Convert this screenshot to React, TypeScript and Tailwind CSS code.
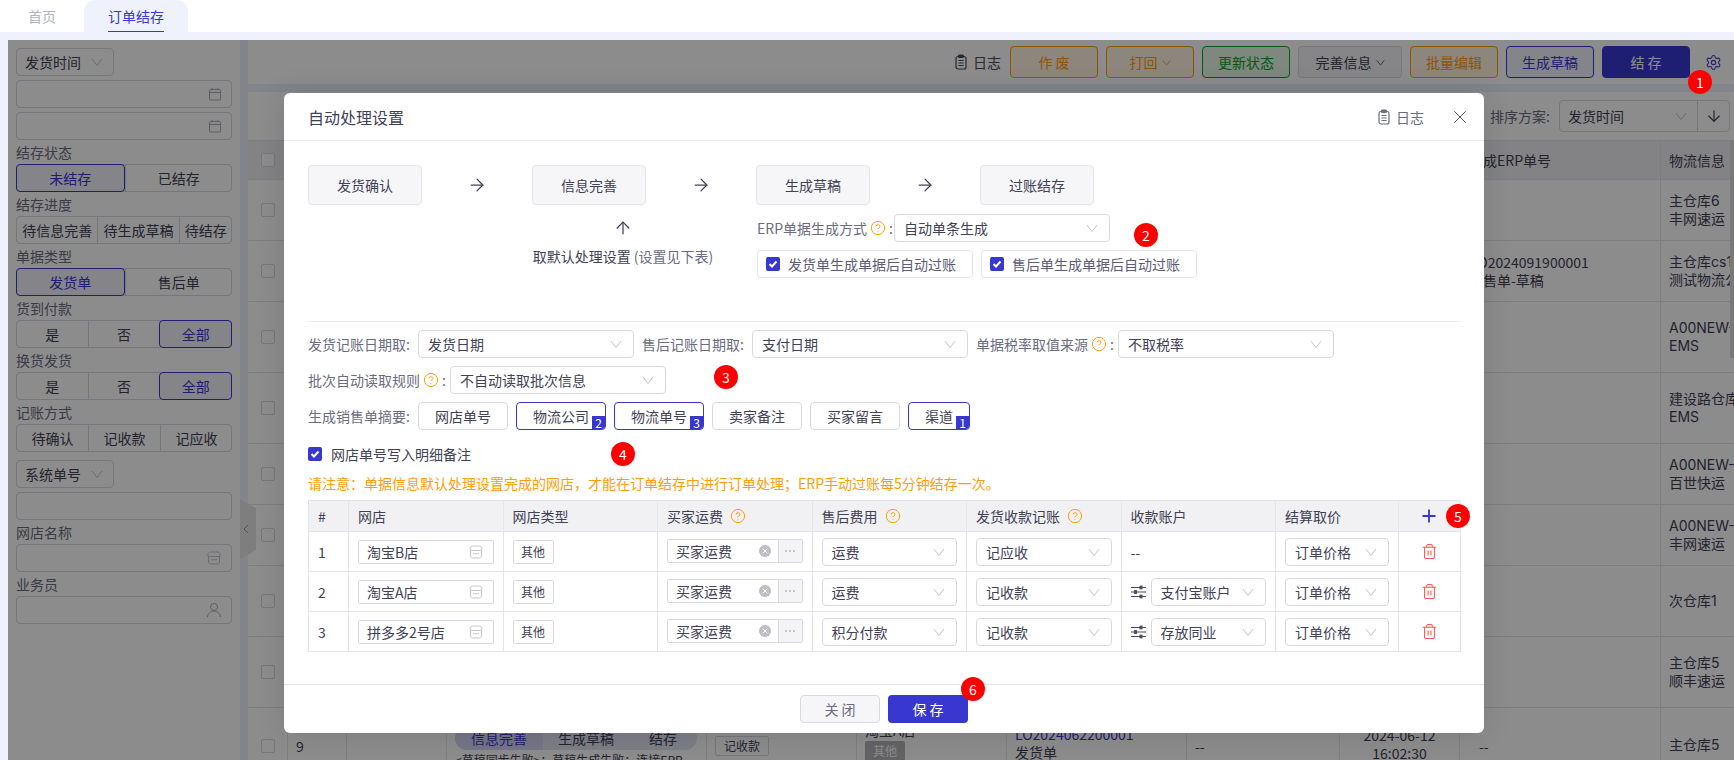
import React from 'react';
import { ArrowDown, ArrowRight, ArrowUp, CircleHelp, Plus, Settings, Trash2, X } from 'lucide-react';

const Chevron = ({ className = 'text-[#c4c5cf]' }: { className?: string }) => (
  <svg width="12" height="12" viewBox="0 0 12 12" fill="none" stroke="currentColor" strokeWidth="1" className={`shrink-0 ${className}`}>
    <polyline points="1,3 6,9.5 11,3" />
  </svg>
);

const LogIcon = () => (
  <svg width="14" height="16" viewBox="0 0 14 16" fill="none" stroke="currentColor" strokeWidth="1.2" className="shrink-0">
    <rect x="2" y="2.5" width="10" height="12.5" rx="2" />
    <rect x="4.5" y="1" width="5" height="2.5" rx="1" fill="currentColor" />
    <path d="M4.5 6.5h5M4.5 9h5M4.5 11.5h5" />
  </svg>
);

const CalendarIcon = () => (
  <svg width="14" height="14" viewBox="0 0 14 14" fill="none" stroke="currentColor" strokeWidth="1" className="text-[#a9aab4]">
    <rect x="1.5" y="2.5" width="11" height="10.5" rx="1" />
    <path d="M1.5 5.5h11M4 1v2.5M10 1v2.5" />
  </svg>
);

const StoreIcon = () => (
  <svg width="16" height="16" viewBox="0 0 16 16" fill="none" stroke="currentColor" strokeWidth="1" className="shrink-0 text-[#c4c5cf]">
    <path d="M2 6.5V4.5C2 3 3 2 4.5 2h7C13 2 14 3 14 4.5v2z" />
    <path d="M2.5 6.5V12c0 1.2 1 2 2 2h7c1 0 2-.8 2-2V6.5" />
    <path d="M5 9c1.5 1.2 4.500 1.200 6 0" />
  </svg>
);

const UserIcon = () => (
  <svg width="16" height="16" viewBox="0 0 16 16" fill="none" stroke="currentColor" strokeWidth="1" className="text-[#a9aab4]">
    <circle cx="8" cy="5" r="3.500" />
    <path d="M1.500 15c.5-3.500 3-6 6.500-6s6 2.500 6.500 6" />
  </svg>
);

const SlidersIcon = () => (
  <svg width="15" height="14" viewBox="0 0 15 14" fill="none" stroke="currentColor" strokeWidth="1.1" className="shrink-0 text-[#4a4b5c]">
    <path d="M0 2.500h15M0 7h15M0 11.500h15" />
    <rect x="9" y="1.200" width="2" height="2.600" fill="currentColor" />
    <rect x="3.500" y="5.700" width="2" height="2.600" fill="currentColor" />
    <rect x="9" y="10.200" width="2" height="2.600" fill="currentColor" />
  </svg>
);

const DotsIcon = () => (
  <svg width="12" height="4" viewBox="0 0 12 4" fill="#8a8b9a">
    <circle cx="2" cy="2" r="0.8" />
    <circle cx="6" cy="2" r="0.8" />
    <circle cx="10" cy="2" r="0.8" />
  </svg>
);

const Help = () => <CircleHelp size={16} strokeWidth={1.5} className="shrink-0 text-[#ff9d0a]" />;

const Check = () => (
  <span className="flex h-[14px] w-[14px] shrink-0 items-center justify-center rounded-[2px] bg-[#3838d0]">
    <svg width="10" height="10" viewBox="0 0 10 10" fill="none" stroke="white" strokeWidth="2">
      <polyline points="1.500,5 4,7.500 8.500,2.500" />
    </svg>
  </span>
);

const Badge = ({ n, className }: { n: number; className: string }) => (
  <div className={`absolute z-30 flex h-6 w-6 items-center justify-center rounded-full bg-[#ff0000] text-sm text-white ${className}`}>{n}</div>
);

const Seg = ({ items, active, auto }: { items: string[]; active?: number; auto?: boolean }) => (
  <div className="flex h-7 rounded-[4px] border border-[#d8d9e3] bg-white">
    {items.map((t, i) => (
      <div
        key={i}
        className={`-my-px flex items-center justify-center border-l first:-ml-px first:rounded-l-[4px] last:-mr-px last:rounded-r-[4px] ${auto ? 'flex-auto px-[5px]' : 'flex-1'} ${
          i === active
            ? 'rounded-[4px] border border-[#3838d0] bg-[#f0f0fa] text-[#3838d0]'
            : 'border-y border-r-0 border-[#d8d9e3] border-y-transparent text-[#3f4154]'
        } ${i === 0 && i !== active ? 'border-l-transparent' : ''}`}
      >
        {t}
      </div>
    ))}
  </div>
);

const SideLabel = ({ children }: { children: React.ReactNode }) => (
  <div className="flex h-[24px] items-center text-[#6b6c80]">{children}</div>
);

const SideInput = ({ icon, className = '' }: { icon?: React.ReactNode; className?: string }) => (
  <div className={`flex h-7 items-center justify-end rounded-[4px] border border-[#d8d9e3] bg-white pr-[9px] ${className}`}>{icon}</div>
);

const SideSelect = ({ text, className = '' }: { text: string; className?: string }) => (
  <div className={`flex h-7 w-[98px] items-center justify-between rounded-[4px] border border-[#d8d9e3] bg-white pl-[8px] pr-[10px] text-[#3f4154] ${className}`}>
    {text}
    <Chevron />
  </div>
);

const Sidebar = () => (
  <aside className="w-[232px] shrink-0 bg-white px-2 pt-2 text-sm">
    <SideSelect text="发货时间" />
    <SideInput icon={<CalendarIcon />} className="mt-1" />
    <SideInput icon={<CalendarIcon />} className="mt-1" />
    <SideLabel>结存状态</SideLabel>
    <Seg items={['未结存', '已结存']} active={0} />
    <SideLabel>结存进度</SideLabel>
    <Seg items={['待信息完善', '待生成草稿', '待结存']} auto />
    <SideLabel>单据类型</SideLabel>
    <Seg items={['发货单', '售后单']} active={0} />
    <SideLabel>货到付款</SideLabel>
    <Seg items={['是', '否', '全部']} active={2} />
    <SideLabel>换货发货</SideLabel>
    <Seg items={['是', '否', '全部']} active={2} />
    <SideLabel>记账方式</SideLabel>
    <Seg items={['待确认', '记收款', '记应收']} />
    <SideSelect text="系统单号" className="mt-2" />
    <SideInput className="mt-1" />
    <SideLabel>网店名称</SideLabel>
    <SideInput icon={<StoreIcon />} />
    <SideLabel>业务员</SideLabel>
    <SideInput icon={<UserIcon />} />
  </aside>
);

const toolBase = 'flex h-8 items-center justify-center gap-1 rounded-[4px] border text-sm';
const orange = 'border-[#ff9d0a] bg-[#fff4e3] text-[#ff9d0a]';

const Toolbar = () => (
  <div className="flex h-11 items-center justify-end bg-white pr-3 text-sm">
    <span className="mr-[9px] flex items-center gap-[5px] text-[#4a4b5c]">
      <LogIcon />
      日志
    </span>
    <div className="flex gap-2">
      <button className={`${toolBase} w-[88px] ${orange}`}>作 废</button>
      <button className={`${toolBase} w-[88px] ${orange}`}>
        打回 <Chevron className="h-[9px] w-[9px] text-[#ff9d0a]" />
      </button>
      <button className={`${toolBase} w-[88px] border-[#0aa31f] bg-[#e5f7e8] text-[#0aa31f]`}>更新状态</button>
      <button className={`${toolBase} w-[104px] border-[#d8d9e3] bg-[#f4f4f7] text-[#3f4154]`}>
        完善信息 <Chevron className="h-[9px] w-[9px] text-[#3f4154]" />
      </button>
      <button className={`${toolBase} w-[88px] ${orange}`}>批量编辑</button>
      <button className={`${toolBase} w-[88px] border-[#3838d0] bg-[#f0f0fd] text-[#3838d0]`}>生成草稿</button>
      <button className={`${toolBase} w-[88px] border-[#3838d0] bg-[#3838d0] text-white`}>结 存</button>
    </div>
    <Settings size={17} strokeWidth={1.5} className="ml-[15px] text-[#3838d0]" />
  </div>
);

const mainCols = 'grid grid-cols-[40px_59px_100px_260px_150px_150px_180px_153px_120px_201px_73px]';
const cell = 'flex h-full items-center overflow-hidden whitespace-nowrap border-r border-[#e4e5ea] px-2';

const rows = [
  { h: 'h-[61px]', erp: [], log: ['主仓库6', '丰网速运'] },
  { h: 'h-[61px]', erp: ['SO2024091900001', '销售单-草稿'], log: ['主仓库cs1', '测试物流公司'] },
  { h: 'h-[71px]', erp: [], log: ['A00NEW-', 'EMS'] },
  { h: 'h-[71px]', erp: [], log: ['建设路仓库', 'EMS'] },
  { h: 'h-[61px]', erp: [], log: ['A00NEW-', '百世快运'] },
  { h: 'h-[61px]', erp: [], log: ['A00NEW-', '丰网速运'] },
  { h: 'h-[71px]', erp: [], log: ['次仓库1'] },
  { h: 'h-[71px]', erp: [], log: ['主仓库5', '顺丰速运'] },
];

const RowCheck = () => <span className="h-[14px] w-[14px] rounded-[2px] border border-[#d8d9e3] bg-white" />;

const BlankCells = ({ n }: { n: number }) => (
  <>
    {Array.from({ length: n }).map((_, i) => (
      <div key={i} className={cell} />
    ))}
  </>
);

const OrderTable = () => (
  <div className="text-sm leading-[18px] text-[#3f4154]">
    <div className={`${mainCols} h-10 border-y border-[#e4e5ea] bg-[#eeeef2]`}>
      <div className={`${cell} justify-center`}>
        <RowCheck />
      </div>
      <BlankCells n={7} />
      <div className={cell} />
      <div className={`${cell} pl-[9px]`}>生成ERP单号</div>
      <div className={`${cell} border-r-0`}>物流信息</div>
    </div>
    {rows.map((r, i) => (
      <div key={i} className={`${mainCols} ${r.h} border-b border-[#e4e5ea]`}>
        <div className={`${cell} justify-center`}>
          <RowCheck />
        </div>
        <BlankCells n={8} />
        <div className={`${cell} flex-col items-start justify-center pl-[9px]`}>
          {r.erp.map(t => (
            <div key={t}>{t}</div>
          ))}
        </div>
        <div className={`${cell} flex-col items-start justify-center border-r-0 font-['Inter','Noto_Sans_CJK_SC',sans-serif]`}>
          {r.log.map(t => (
            <div key={t}>{t}</div>
          ))}
        </div>
      </div>
    ))}
    <div className={`${mainCols} h-[76px]`}>
      <div className={`${cell} justify-center`}>
        <RowCheck />
      </div>
      <div className={cell}>9</div>
      <div className={cell} />
      <div className={`${cell} flex-col items-start justify-start pt-[18px]`}>
        <div className="flex h-6 w-[242px] items-center rounded-full bg-[#e3e3f6]">
          <span className="flex h-6 w-[88px] items-center justify-center rounded-l-full bg-[#d6d6f5] text-[#3838d0]">信息完善</span>
          <span className="w-[86px] text-center">生成草稿</span>
          <span className="w-[68px] text-center">结存</span>
        </div>
        <div className="mt-[2px] text-xs">&lt;草稿同步失败&gt;：草稿生成失败：连接ERP</div>
      </div>
      <div className={cell}>
        <span className="flex h-5 w-[54px] items-center justify-center rounded-[2px] border border-[#d8d9e3] text-xs">记收款</span>
      </div>
      <div className={`${cell} flex-col items-start justify-center pb-[10px]`}>
        <div>淘宝A店</div>
        <span className="mt-[2px] flex h-5 w-10 items-center justify-center rounded-[2px] bg-[#b4b4b8] text-xs text-white">其他</span>
      </div>
      <div className={`${cell} flex-col items-start justify-center pb-[6px]`}>
        <div className="text-[#3838d0]">LO2024062200001</div>
        <div>发货单</div>
      </div>
      <div className={cell}>--</div>
      <div className={`${cell} flex-col items-center justify-center pb-[4px]`}>
        <div>2024-06-12</div>
        <div>16:02:30</div>
      </div>
      <div className={`${cell} pl-[19px]`}>--</div>
      <div className={`${cell} border-r-0 pb-[2px] font-['Inter','Noto_Sans_CJK_SC',sans-serif]`}>主仓库5</div>
    </div>
  </div>
);

const FlowBox = ({ children }: { children: React.ReactNode }) => (
  <div className="flex h-10 w-[114px] items-center justify-center rounded-[4px] border border-[#e4e5ea] bg-[#f6f6f9] text-[#3f4154]">{children}</div>
);

const FlowArrow = () => (
  <div className="flex w-[110px] items-center justify-center">
    <ArrowRight size={20} strokeWidth={1.5} className="text-[#3f4154]" />
  </div>
);

const Select = ({ text, className = 'w-[216px]', chevronRight = 'pr-[11px]' }: { text: string; className?: string; chevronRight?: string }) => (
  <div className={`flex h-7 shrink-0 items-center justify-between rounded-[4px] border border-[#d8d9e3] bg-white pl-[9px] text-[#3f4154] ${chevronRight} ${className}`}>
    {text}
    <Chevron />
  </div>
);

const CheckBox = ({ text }: { text: string }) => (
  <div className="flex h-7 w-[216px] items-center gap-2 rounded-[4px] border border-[#e4e5ea] pl-[8px] text-[#5c5d72]">
    <Check />
    {text}
  </div>
);

const FormLabel = ({ children, className }: { children: React.ReactNode; className: string }) => (
  <span className={`flex shrink-0 items-center gap-[3px] whitespace-nowrap text-[#6b6c80] ${className}`}>{children}</span>
);

const Chip = ({ text, n, className = 'w-[90px]' }: { text: string; n?: number; className?: string }) => (
  <div
    className={`relative flex h-7 items-center justify-center overflow-hidden rounded-[4px] border text-[#3f4154] ${
      n ? 'border-[#3838d0]' : 'border-[#d8d9e3]'
    } ${className}`}
  >
    {text}
    {n && <span className="absolute bottom-0 right-0 flex h-[13px] w-[13px] items-center justify-center bg-[#3838d0] text-xs leading-none text-white">{n}</span>}
  </div>
);

const shopCols = 'grid grid-cols-[40px_154.5px_154.5px_154.5px_154.5px_154.5px_154.5px_122.5px_62.5px]';
const shopCell = 'flex items-center border-b border-r border-[#e4e5ea] px-[9px]';

const shops = [
  { name: '淘宝B店', fee: '运费', record: '记应收', account: '' },
  { name: '淘宝A店', fee: '运费', record: '记收款', account: '支付宝账户' },
  { name: '拼多多2号店', fee: '积分付款', record: '记收款', account: '存放同业' },
];

const ShopTable = () => (
  <div className="mt-[7px] border-l border-t border-[#e4e5ea] text-sm text-[#3f4154]">
    <div className={`${shopCols} h-[31px] bg-[#f1f1f4]`}>
      <div className={shopCell}>#</div>
      <div className={shopCell}>网店</div>
      <div className={shopCell}>网店类型</div>
      <div className={`${shopCell} gap-[7px]`}>
        买家运费 <Help />
      </div>
      <div className={`${shopCell} gap-[7px]`}>
        售后费用 <Help />
      </div>
      <div className={`${shopCell} gap-[7px]`}>
        发货收款记账 <Help />
      </div>
      <div className={shopCell}>收款账户</div>
      <div className={shopCell}>结算取价</div>
      <div className={`${shopCell} justify-center`}>
        <Plus size={20} strokeWidth={2.2} className="text-[#3838d0]" />
      </div>
    </div>
    {shops.map((s, i) => (
      <div key={s.name} className={`${shopCols} h-10`}>
        <div className={shopCell}>{i + 1}</div>
        <div className={shopCell}>
          <div className="flex h-6 w-full items-center justify-between rounded-[2px] border border-[#d8d9e3] pl-[8px] pr-[9px]">
            {s.name}
            <StoreIcon />
          </div>
        </div>
        <div className={shopCell}>
          <span className="flex h-6 w-[41px] items-center justify-center rounded-[2px] border border-[#d8d9e3] text-xs">其他</span>
        </div>
        <div className={shopCell}>
          <div className="-mt-px flex h-6 w-full items-center rounded-[2px] border border-[#d8d9e3]">
            <span className="flex-1 pl-[8px]">买家运费</span>
            <span className="mr-[7px] flex h-3 w-3 items-center justify-center rounded-full bg-[#bdbdc2]">
              <X size={8} strokeWidth={3} className="text-white" />
            </span>
            <span className="flex h-full w-6 items-center justify-center border-l border-[#d8d9e3] bg-[#f4f4f7]">
              <DotsIcon />
            </span>
          </div>
        </div>
        <div className={shopCell}>
          <Select text={s.fee} className="h-6 w-full rounded-[2px]" />
        </div>
        <div className={shopCell}>
          <Select text={s.record} className="h-6 w-full rounded-[2px]" />
        </div>
        <div className={`${shopCell} gap-[5px]`}>
          {s.account ? (
            <>
              <SlidersIcon />
              <Select text={s.account} className="h-6 min-w-0 flex-1 rounded-[2px]" />
            </>
          ) : (
            '--'
          )}
        </div>
        <div className={shopCell}>
          <Select text="订单价格" className="h-6 w-full rounded-[2px]" />
        </div>
        <div className={`${shopCell} justify-center`}>
          <Trash2 size={17} strokeWidth={1.5} className="text-[#ff5a5a]" />
        </div>
      </div>
    ))}
  </div>
);

const Modal = () => (
  <div className="absolute left-[284px] top-[93px] z-20 flex h-[640px] w-[1200px] flex-col rounded-[6px] bg-white text-sm shadow-[0_0_30px_rgba(0,0,0,0.12)]">
    <div className="flex h-12 shrink-0 items-center justify-between border-b border-[#e9e9ee] pl-6 pr-[13px]">
      <span className="text-base text-[#3f4154]">自动处理设置</span>
      <div className="flex items-center text-[#6b6c80]">
        <span className="flex items-center gap-[5px]">
          <LogIcon />
          日志
        </span>
        <X size={22} strokeWidth={1} className="ml-[25px] text-[#3f4154]" />
      </div>
    </div>

    <div className="flex-1 px-6 pt-6">
      <div className="flex">
        <FlowBox>发货确认</FlowBox>
        <FlowArrow />
        <FlowBox>信息完善</FlowBox>
        <FlowArrow />
        <FlowBox>生成草稿</FlowBox>
        <FlowArrow />
        <FlowBox>过账结存</FlowBox>
      </div>

      <div className="mt-[9px] flex">
        <div className="w-[449px] pl-[225px]">
          <div className="flex w-[180px] flex-col items-center">
            <div className="flex h-7 items-center">
              <ArrowUp size={20} strokeWidth={1.5} className="text-[#3f4154]" />
            </div>
            <div className="mt-[4px] whitespace-nowrap text-[#3f4154]">
              取默认处理设置 <span className="text-[#6b6c80]">(设置见下表)</span>
            </div>
          </div>
        </div>
        <div className="flex flex-col gap-2">
          <div className="flex items-center">
            <FormLabel className="w-[137px]">
              ERP单据生成方式 <Help /> :
            </FormLabel>
            <Select text="自动单条生成" />
          </div>
          <div className="flex gap-2">
            <CheckBox text="发货单生成单据后自动过账" />
            <CheckBox text="售后单生成单据后自动过账" />
          </div>
        </div>
      </div>

      <div className="mt-[43px] h-px bg-[#e9e9ee]" />

      <div className="mt-2 flex flex-col gap-2">
        <div className="flex items-center gap-2">
          <FormLabel className="w-[102px]">发货记账日期取:</FormLabel>
          <Select text="发货日期" />
          <FormLabel className="w-[102px]">售后记账日期取:</FormLabel>
          <Select text="支付日期" />
          <FormLabel className="w-[134px]">
            单据税率取值来源 <Help /> :
          </FormLabel>
          <Select text="不取税率" />
        </div>
        <div className="flex items-center gap-2">
          <FormLabel className="w-[134px]">
            批次自动读取规则 <Help /> :
          </FormLabel>
          <Select text="不自动读取批次信息" />
        </div>
        <div className="flex items-center gap-2">
          <FormLabel className="w-[102px]">生成销售单摘要:</FormLabel>
          <Chip text="网店单号" />
          <Chip text="物流公司" n={2} />
          <Chip text="物流单号" n={3} />
          <Chip text="卖家备注" />
          <Chip text="买家留言" />
          <Chip text="渠道" n={1} className="w-[62px]" />
        </div>
      </div>

      <div className="mt-[16px] flex h-4 items-center gap-[9px] text-[#3f4154]">
        <Check />
        网店单号写入明细备注
      </div>
      <div className="mt-[11px] h-5 leading-5 text-[#ff9d0a]">
        请注意：单据信息默认处理设置完成的网店，才能在订单结存中进行订单处理；ERP手动过账每5分钟结存一次。
      </div>

      <ShopTable />
    </div>

    <div className="flex h-[49px] shrink-0 items-center justify-center gap-2 border-t border-[#e4e5ea]">
      <button className="h-7 w-20 rounded-[4px] border border-[#d8d9e3] bg-[#f6f6f9] text-[#6b6c80]">关 闭</button>
      <button className="h-7 w-20 rounded-[4px] bg-[#3838d0] text-white">保 存</button>
    </div>
  </div>
);

export default function App() {
  return (
    <div className="relative h-[760px] w-[1734px] overflow-hidden bg-[#eff1fd] font-['Noto_Sans_CJK_SC',sans-serif]">
      <div className="flex h-8 items-stretch bg-white text-sm">
        <div className="flex w-[84px] items-center justify-center text-[#b1b4c2]">首页</div>
        <div className="flex w-[104px] justify-center rounded-t-xl bg-[#eff1fd] text-[#3838d0]">
          <span className="flex h-8 items-center border-b border-[#3838d0]">订单结存</span>
        </div>
      </div>

      <div className="flex gap-2 pl-2 pt-2">
        <Sidebar />
        <div className="min-w-0 flex-1">
          <Toolbar />
          <div className="mt-2 bg-white">
            <div className="flex h-12 items-center justify-end pr-1 text-sm text-[#6b6c80]">
              <span className="mr-[9px]">排序方案:</span>
              <div className="flex h-8 w-[171px] items-center rounded-[4px] border border-[#d8d9e3] text-[#3f4154]">
                <span className="flex-1 pl-2">发货时间</span>
                <Chevron className="mr-[10px] text-[#c4c5cf]" />
                <span className="flex h-full w-8 items-center justify-center border-l border-[#d8d9e3]">
                  <ArrowDown size={18} strokeWidth={1.5} />
                </span>
              </div>
            </div>
            <OrderTable />
          </div>
        </div>
      </div>

      <div className="absolute right-0 top-[140px] h-[218px] w-1 bg-[#dcdce2]" />
      <div className="absolute left-[240px] top-[499px] flex h-[60px] w-4 items-center justify-center bg-[#e6e6e6] pr-1 text-[#999] [clip-path:polygon(0_0,100%_15%,100%_85%,0_100%)]">
        <svg width="6" height="10" viewBox="0 0 6 10" fill="none" stroke="currentColor" strokeWidth="1">
          <polyline points="5,1 1,5 5,9" />
        </svg>
      </div>

      {/* dark backdrop behind the dialog, it leaves the tabs and the left gutter alone */}
      <div className="absolute bottom-0 left-2 right-0 top-10 z-10 bg-black/45" />

      <Modal />

      <Badge n={1} className="left-[1688px] top-[70px]" />
      <Badge n={2} className="left-[1134px] top-[223px]" />
      <Badge n={3} className="left-[714px] top-[365px]" />
      <Badge n={4} className="left-[611px] top-[442px]" />
      <Badge n={5} className="left-[1446px] top-[504px]" />
      <Badge n={6} className="left-[961px] top-[677px]" />
    </div>
  );
}
